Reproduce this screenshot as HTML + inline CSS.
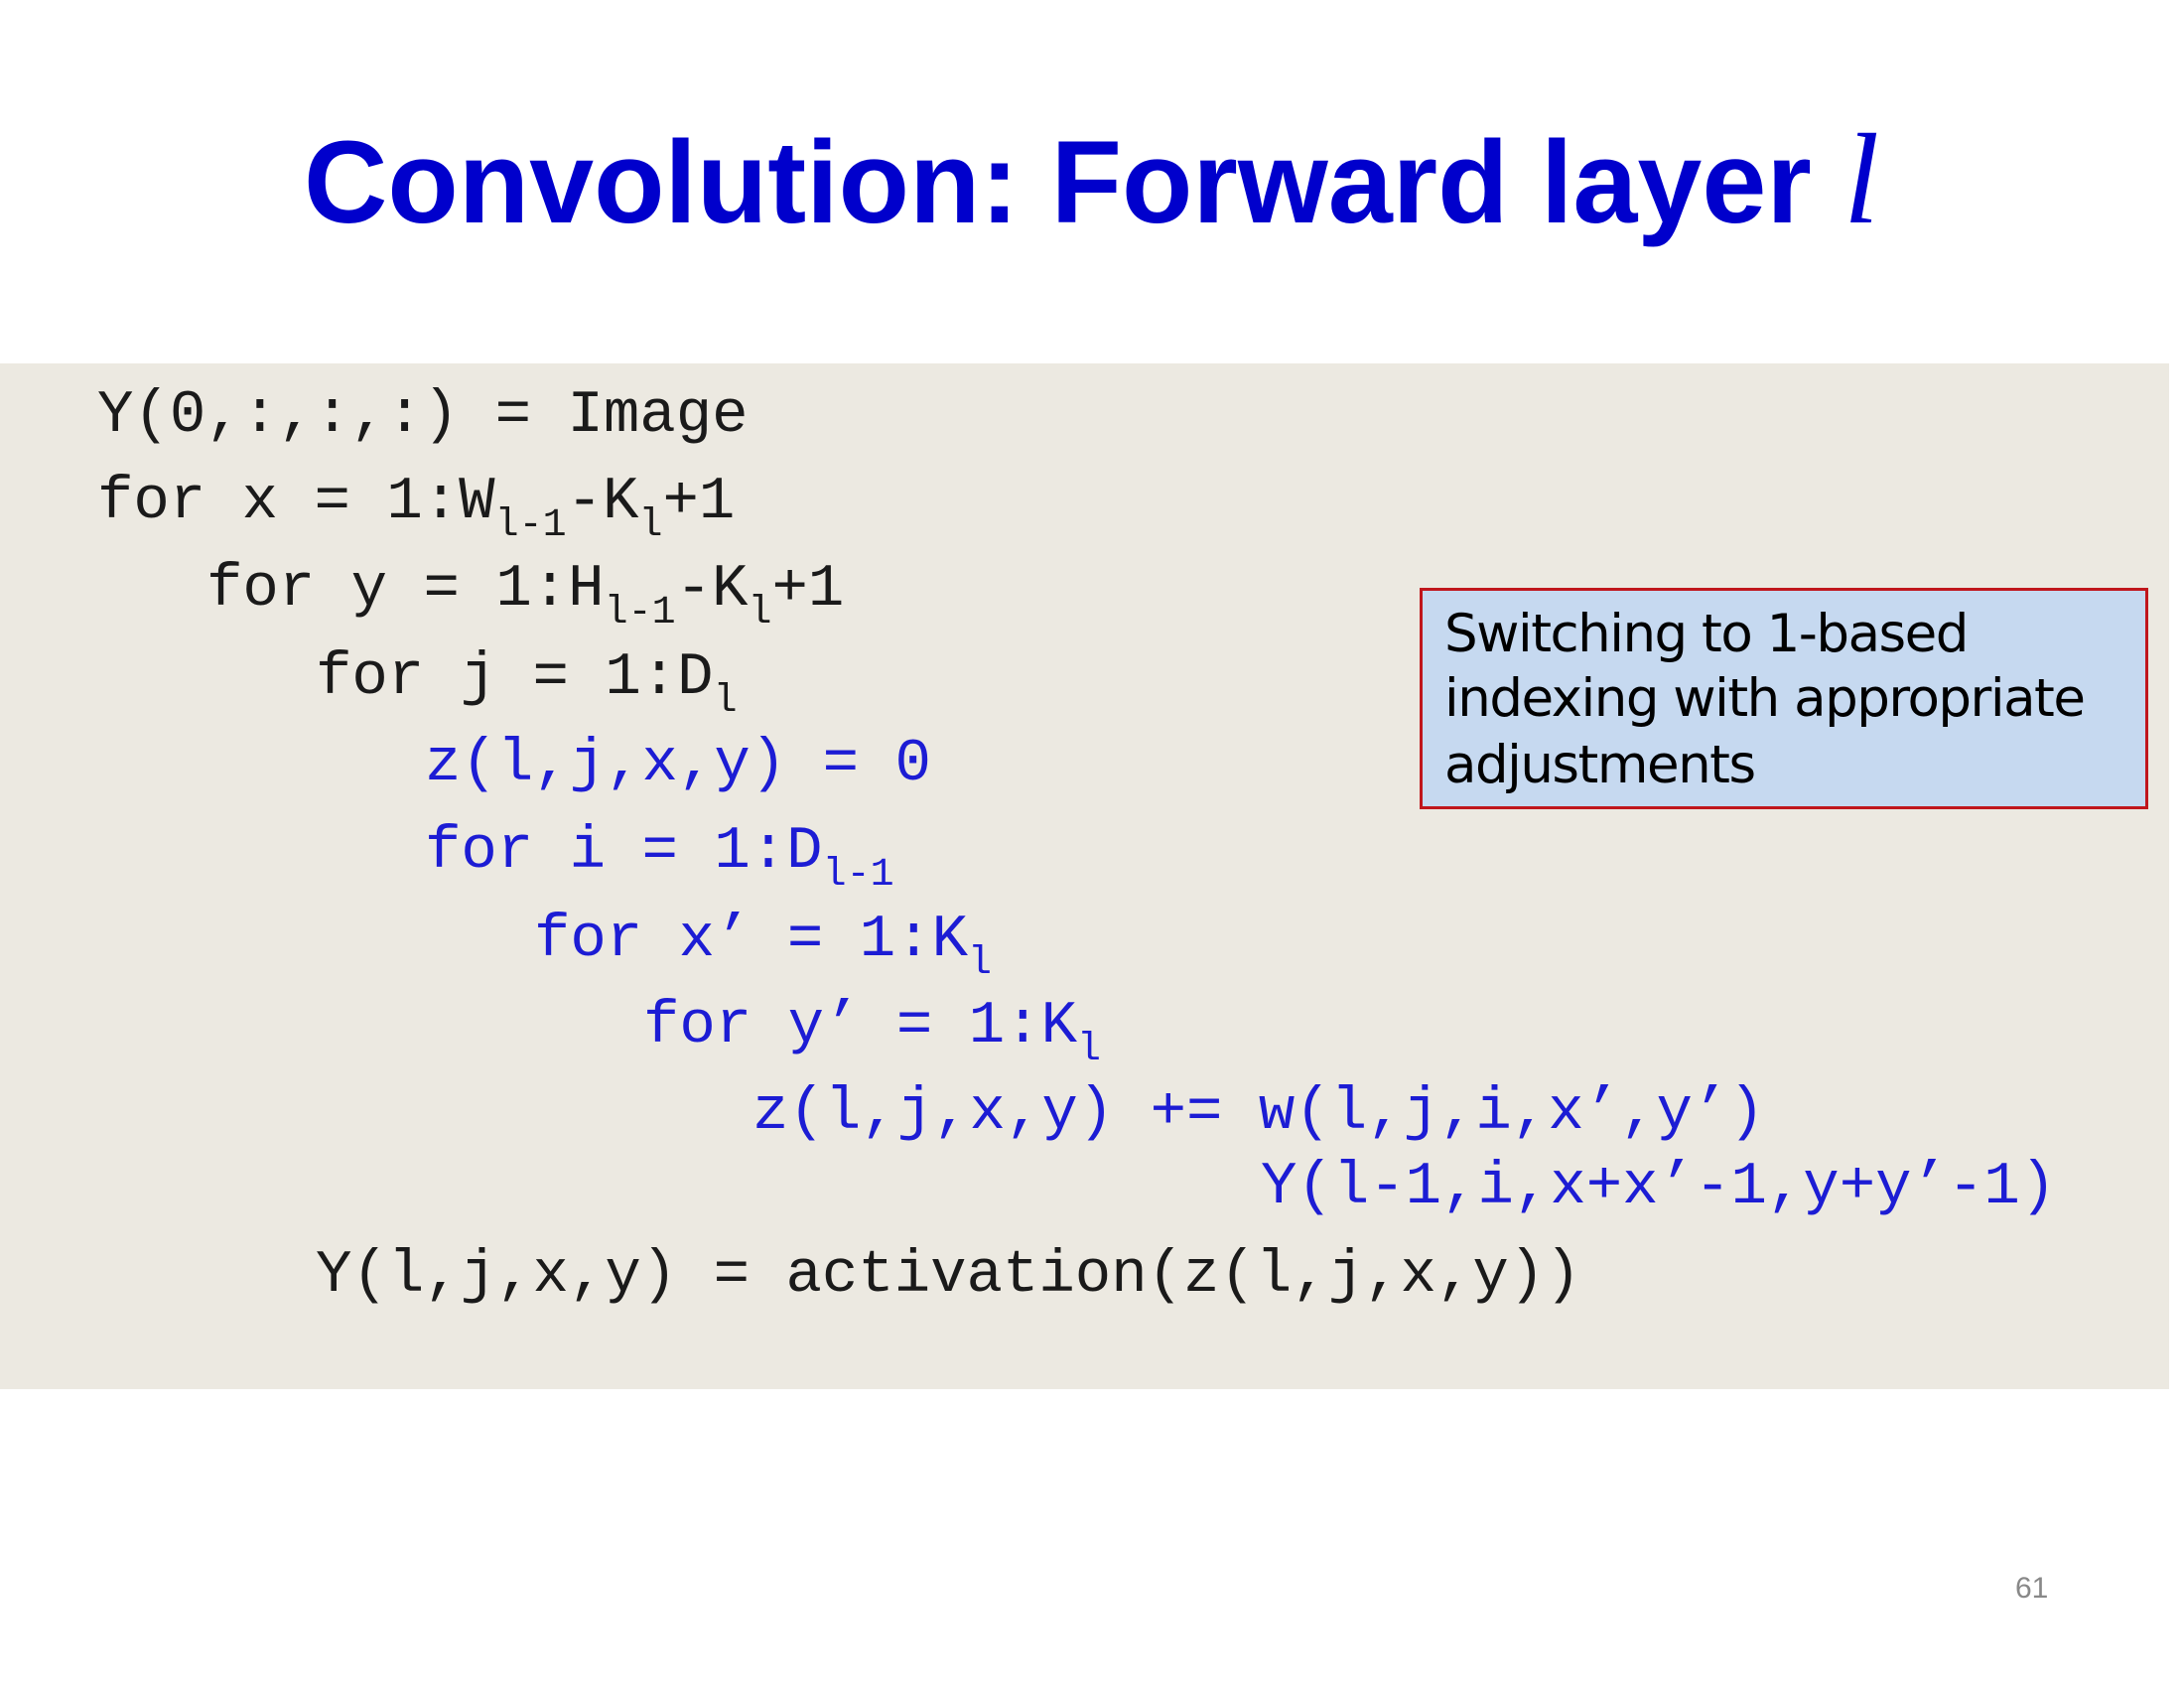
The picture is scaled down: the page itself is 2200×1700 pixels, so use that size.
<!DOCTYPE html>
<html><head><meta charset="utf-8"><style>
body{margin:0;width:2200px;height:1700px;background:#fff;position:relative;overflow:hidden}
.t{position:absolute;left:0;width:2200px;top:106px;text-align:center;line-height:1;font:bold 118px "Liberation Sans",sans-serif;color:#0000cc;white-space:nowrap}
.t span.in{display:inline-block;transform:scaleX(0.99);transform-origin:center}
.t i{font-family:"Liberation Serif",serif;font-weight:normal;font-style:italic;font-size:130px}
.g{position:absolute;left:0;top:366px;width:2185px;height:1033px;background:#ece9e1}
.c{position:absolute;font:60.7px/1 "Liberation Mono",monospace;color:#1a1a1a;white-space:pre}
.b{color:#1c1cd4}
sub{font-size:40px;vertical-align:-18px;line-height:0}
.box{position:absolute;left:1430px;top:592px;width:728px;height:217px;background:#c6d9f0;border:3px solid #c0161c}
.bt{position:absolute;left:1455px;font:53px/1 "DejaVu Sans","Liberation Sans",sans-serif;color:#000;white-space:nowrap;letter-spacing:-1.5px}
.pn{position:absolute;left:2030px;top:1585px;font:30px/1 "Liberation Sans",sans-serif;color:#888}
</style></head><body>
<div class="t"><span class="in">Convolution: Forward layer <i>l</i></span></div>
<div class="g"></div>
<div class="c" style="left:98px;top:389px">Y(0,:,:,:) = Image</div>
<div class="c" style="left:98px;top:476px">for x = 1:W<sub>l-1</sub>-K<sub>l</sub>+1</div>
<div class="c" style="left:208px;top:564px">for y = 1:H<sub>l-1</sub>-K<sub>l</sub>+1</div>
<div class="c" style="left:318px;top:653px">for j = 1:D<sub>l</sub></div>
<div class="c b" style="left:428px;top:740px">z(l,j,x,y) = 0</div>
<div class="c b" style="left:428px;top:828px">for i = 1:D<sub>l-1</sub></div>
<div class="c b" style="left:538px;top:917px">for x’ = 1:K<sub>l</sub></div>
<div class="c b" style="left:648px;top:1004px">for y’ = 1:K<sub>l</sub></div>
<div class="c b" style="left:758px;top:1091px">z(l,j,x,y) += w(l,j,i,x’,y’)</div>
<div class="c b" style="left:1270px;top:1166px">Y(l-1,i,x+x’-1,y+y’-1)</div>
<div class="c" style="left:318px;top:1255px">Y(l,j,x,y) = activation(z(l,j,x,y))</div>
<div class="box"></div>
<div class="bt" style="top:612px">Switching to 1-based</div>
<div class="bt" style="top:677px">indexing with appropriate</div>
<div class="bt" style="top:744px">adjustments</div>
<div class="pn">61</div>
</body></html>
